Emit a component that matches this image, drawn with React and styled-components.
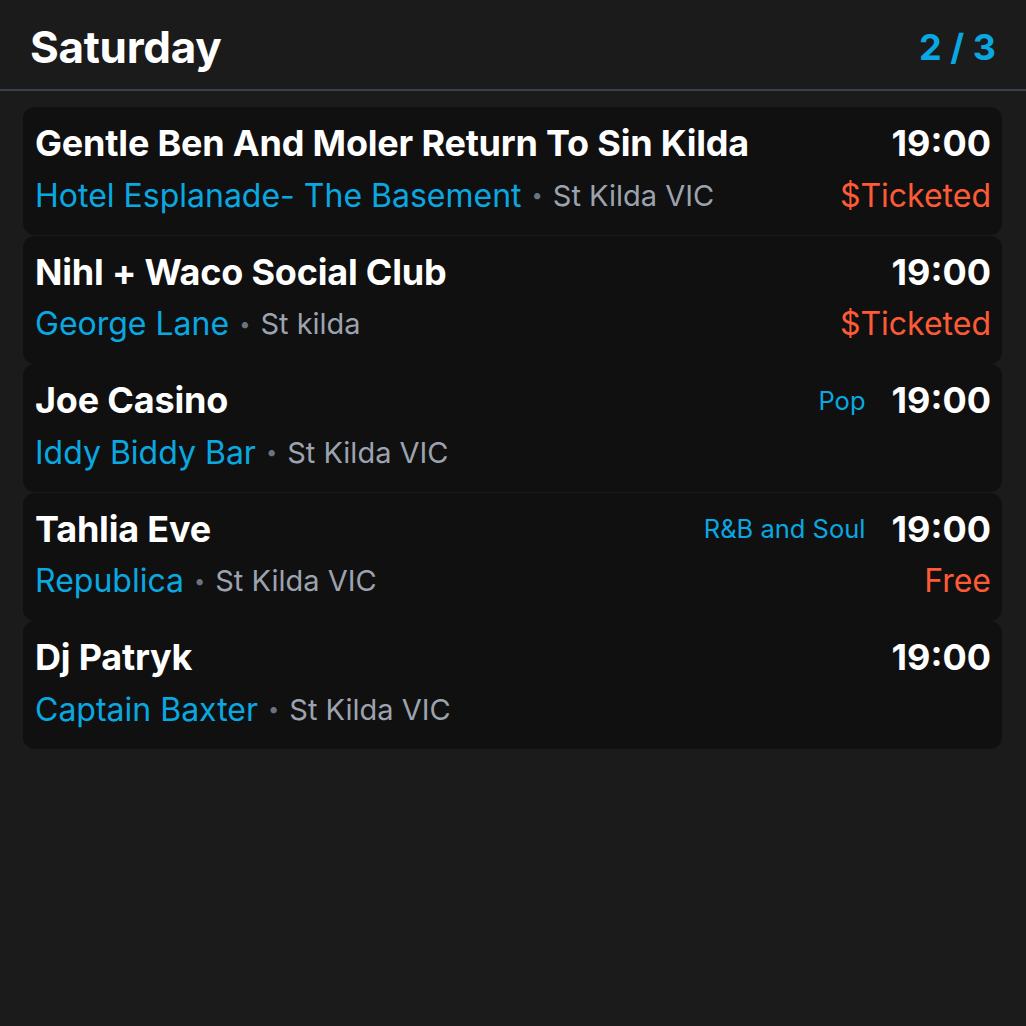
import styled, { createGlobalStyle } from 'styled-components'

const GlobalStyle = createGlobalStyle`
	html, body {
		margin: 0;
		padding: 0;
		background: #1b1b1b;
	}
	body {
		font-family: Inter, "Noto Sans", sans-serif;
		-webkit-font-smoothing: antialiased;
	}
`

const Page = styled.div`
	width: 1026px;
	height: 1026px;
	background: #1b1b1b;
	display: flex;
	flex-direction: column;
`

const Header = styled.header`
	display: flex;
	align-items: center;
	justify-content: space-between;
	height: 85px;
	padding: 4px 30px 0 30px;
	border-bottom: 2px solid #3a404c;
`

const Title = styled.h1`
	margin: 0;
	color: #ffffff;
	font-size: 44px;
	font-weight: 700;
	letter-spacing: -0.3px;
`

const Pager = styled.span`
	color: #0aa8e0;
	font-size: 36px;
	font-weight: 700;
`

const List = styled.div`
	display: flex;
	flex-direction: column;
	gap: 0.5px;
	padding: 16px 24px 0 23px;
`

const Card = styled.div`
	display: flex;
	flex-direction: column;
	gap: 8px;
	height: 128px;
	box-sizing: border-box;
	padding: 14px 11px 0 12px;
	background: #101010;
	border-radius: 12px;
`

const Row = styled.div`
	display: flex;
	align-items: center;
	height: 44px;
	white-space: nowrap;
`

const EventName = styled.span`
	flex: 1;
	color: #ffffff;
	font-size: 36px;
	font-weight: 700;
	letter-spacing: -0.2px;
`

const Genre = styled.span`
	color: #0aa8e0;
	font-size: 25.5px;
	margin-right: 26px;
`

const Time = styled.span`
	color: #ffffff;
	font-size: 36px;
	font-weight: 700;
`

const Venue = styled.span`
	color: #0aa8e0;
	font-size: 32px;
`

const Dot = styled.span`
	color: #6b7280;
	font-size: 20px;
	margin: 0 10px;
`

const Place = styled.span`
	flex: 1;
	color: #9ca3af;
	font-size: 29px;
`

const Price = styled.span`
	color: #ff5a36;
	font-size: 32px;
`

const events = [
	{ name: 'Gentle Ben And Moler Return To Sin Kilda', venue: 'Hotel Esplanade- The Basement', place: 'St Kilda VIC', price: '$Ticketed' },
	{ name: 'Nihl + Waco Social Club', venue: 'George Lane', place: 'St kilda', price: '$Ticketed' },
	{ name: 'Joe Casino', venue: 'Iddy Biddy Bar', place: 'St Kilda VIC', genre: 'Pop' },
	{ name: 'Tahlia Eve', venue: 'Republica', place: 'St Kilda VIC', genre: 'R&B and Soul', price: 'Free' },
	{ name: 'Dj Patryk', venue: 'Captain Baxter', place: 'St Kilda VIC' },
]

export default function App() {
	return (
		<Page>
			<GlobalStyle />
			<Header>
				<Title>Saturday</Title>
				<Pager>2 / 3</Pager>
			</Header>
			<List>
				{events.map(e => (
					<Card key={e.name}>
						<Row>
							<EventName>{e.name}</EventName>
							{e.genre && <Genre>{e.genre}</Genre>}
							<Time>19:00</Time>
						</Row>
						<Row>
							<Venue>{e.venue}</Venue>
							<Dot>•</Dot>
							<Place>{e.place}</Place>
							{e.price && <Price>{e.price}</Price>}
						</Row>
					</Card>
				))}
			</List>
		</Page>
	)
}
